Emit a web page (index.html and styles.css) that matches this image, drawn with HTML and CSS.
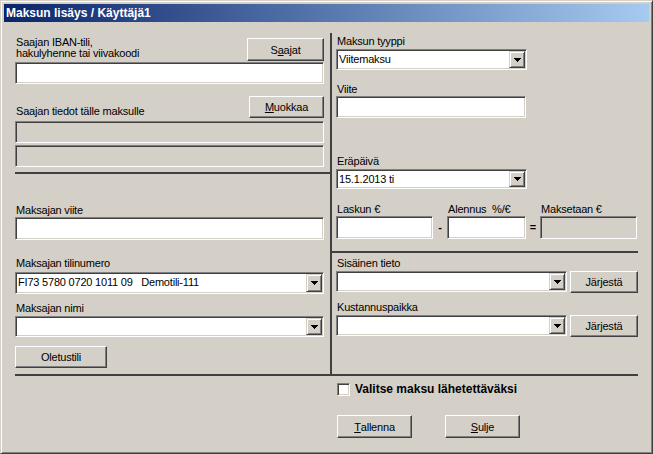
FILE: index.html
```html
<!DOCTYPE html>
<html lang="fi">
<head>
<meta charset="utf-8">
<title>Maksun lisäys</title>
<link rel="stylesheet" href="styles.css">
</head>
<body>
<div class="window">
  <div class="titlebar">Maksun lisäys / Käyttäjä1</div>
  <div class="client">
    <div class="main">
      <div class="col-left">
        <div class="row1 lw">
          <div class="lbl2">Saajan IBAN-tili,<br>hakulyhenne tai viivakoodi</div>
          <button class="btn b-saajat">S<u>a</u>ajat</button>
        </div>
        <div class="edit lw"></div>
        <div class="row2 lw">
          <div class="lbl l-tiedot">Saajan tiedot tälle maksulle</div>
          <button class="btn b-muokkaa"><u>M</u>uokkaa</button>
        </div>
        <div class="edit dis lw"></div>
        <div class="edit dis lw d2"></div>
        <div class="hline hl-left"></div>
        <div class="lbl l-mviite">Maksajan viite</div>
        <div class="edit lw h23"></div>
        <div class="lbl l-tili">Maksajan tilinumero</div>
        <div class="combo lw c-tili">
          <div class="combo-text">FI73 5780 0720 1011 09   Demotili-111</div>
          <div class="drop"><svg width="7" height="4" viewBox="0 0 7 4"><path d="M0 0h7v1H0zM1 1h5v1H1zM2 2h3v1H2zM3 3h1v1H3z"/></svg></div>
        </div>
        <div class="lbl l-nimi">Maksajan nimi</div>
        <div class="combo lw c-nimi">
          <div class="combo-text"></div>
          <div class="drop"><svg width="7" height="4" viewBox="0 0 7 4"><path d="M0 0h7v1H0zM1 1h5v1H1zM2 2h3v1H2zM3 3h1v1H3z"/></svg></div>
        </div>
        <button class="btn b-oletus">Oletustili</button>
      </div>
      <div class="vline"></div>
      <div class="col-right">
        <div class="lbl l-tyyppi">Maksun tyyppi</div>
        <div class="combo c-tyyppi">
          <div class="combo-text">Viitemaksu</div>
          <div class="drop"><svg width="7" height="4" viewBox="0 0 7 4"><path d="M0 0h7v1H0zM1 1h5v1H1zM2 2h3v1H2zM3 3h1v1H3z"/></svg></div>
        </div>
        <div class="lbl l-viite">Viite</div>
        <div class="edit e-viite"></div>
        <div class="lbl l-era">Eräpäivä</div>
        <div class="combo c-era">
          <div class="combo-text">15.1.2013 ti</div>
          <div class="drop"><svg width="7" height="4" viewBox="0 0 7 4"><path d="M0 0h7v1H0zM1 1h5v1H1zM2 2h3v1H2zM3 3h1v1H3z"/></svg></div>
        </div>
        <div class="amounts">
          <div class="lbl">Laskun €</div>
          <div></div>
          <div class="lbl">Alennus  %/€</div>
          <div></div>
          <div class="lbl">Maksetaan €</div>
          <div class="edit h23"></div>
          <div class="sign">-</div>
          <div class="edit h23"></div>
          <div class="sign">=</div>
          <div class="edit dis h23"></div>
        </div>
        <div class="hline hl-right"></div>
        <div class="lbl l-sis">Sisäinen tieto</div>
        <div class="pickrow">
          <div class="combo c-pick">
            <div class="combo-text"></div>
            <div class="drop"><svg width="7" height="4" viewBox="0 0 7 4"><path d="M0 0h7v1H0zM1 1h5v1H1zM2 2h3v1H2zM3 3h1v1H3z"/></svg></div>
          </div>
          <button class="btn b-jarj">Järjestä</button>
        </div>
        <div class="lbl l-kust">Kustannuspaikka</div>
        <div class="pickrow">
          <div class="combo c-pick">
            <div class="combo-text"></div>
            <div class="drop"><svg width="7" height="4" viewBox="0 0 7 4"><path d="M0 0h7v1H0zM1 1h5v1H1zM2 2h3v1H2zM3 3h1v1H3z"/></svg></div>
          </div>
          <button class="btn b-jarj">Järjestä</button>
        </div>
      </div>
    </div>
    <div class="hline hl-bottom"></div>
    <div class="footer">
      <div class="checkrow">
        <div class="check"></div>
        <div class="checklbl">Valitse maksu lähetettäväksi</div>
      </div>
      <div class="btnrow">
        <button class="btn b-foot"><u>T</u>allenna</button>
        <button class="btn b-foot"><u>S</u>ulje</button>
      </div>
    </div>
  </div>
</div>
</body>
</html>
```

FILE: styles.css
```css
* { box-sizing: border-box; }

body {
  margin: 0;
  background: #d4d0c8;
  font-family: "Liberation Sans", Arial, sans-serif;
  font-size: 11px;
  letter-spacing: -0.2px;
  color: #000;
}

.window {
  width: 653px;
  height: 454px;
  background: #d4d0c8;
  border: 1px solid;
  border-color: #d4d0c8 #404040 #404040 #d4d0c8;
  box-shadow: inset 1px 1px #fff, inset -1px -1px #808080;
  padding: 3px;
  display: flex;
  flex-direction: column;
}

.titlebar {
  height: 18px;
  background: linear-gradient(to right, #0a246a, #a6caf0);
  color: #fff;
  font-weight: bold;
  font-size: 12px;
  letter-spacing: 0;
  line-height: 18px;
  padding-left: 2px;
  white-space: nowrap;
}

.client {
  flex: 1;
  padding: 11px 0 0 11px;
}

.main {
  display: flex;
  height: 341px;
}

.col-left {
  width: 315px;
  display: flex;
  flex-direction: column;
}

.lw { width: 309px; }

.vline {
  width: 2px;
  background: #404040;
}

.col-right {
  width: 306px;
  padding-left: 4px;
  display: flex;
  flex-direction: column;
}

.hline {
  height: 2px;
  background: #404040;
  flex: none;
}

.hl-left { width: 315px; margin-top: 5px; }
.hl-right { width: 306px; margin-left: -4px; margin-top: 12px; }
.hl-bottom { width: 623px; }

.lbl {
  display: block;
  height: 13px;
  line-height: 13px;
  padding-left: 1px;
  white-space: pre;
}

.lbl2 {
  line-height: 11px;
  margin-top: 4px;
  padding-left: 1px;
  white-space: nowrap;
}

.edit {
  height: 22px;
  background: #fff;
  border: 1px solid;
  border-color: #808080 #fff #fff #808080;
  box-shadow: inset 1px 1px #404040, inset -1px -1px #d4d0c8;
  flex: none;
}
.edit.h23 { height: 23px; }
.edit.dis { background: #d4d0c8; }
.edit.d2 { margin-top: 2px; }

.combo {
  display: flex;
  height: 21px;
  background: #fff;
  border: 1px solid;
  border-color: #808080 #fff #fff #808080;
  box-shadow: inset 1px 1px #404040, inset -1px -1px #d4d0c8;
  padding: 1px;
  flex: none;
}

.combo-text {
  flex: 1;
  padding-left: 1px;
  line-height: 17px;
  white-space: pre;
  overflow: hidden;
}

.drop {
  width: 16px;
  flex: none;
  background: #d4d0c8;
  border: 1px solid;
  border-color: #d4d0c8 #404040 #404040 #d4d0c8;
  box-shadow: inset 1px 1px #fff, inset -1px -1px #808080;
  display: flex;
  align-items: center;
  justify-content: center;
}
.drop svg { display: block; fill: #000; }

.btn {
  font: inherit;
  letter-spacing: inherit;
  color: #000;
  height: 22px;
  padding: 0;
  margin: 0;
  background: #d4d0c8;
  border: 1px solid;
  border-color: #fff #404040 #404040 #fff;
  box-shadow: inset -1px -1px #808080;
  display: flex;
  align-items: center;
  justify-content: center;
  flex: none;
}
.btn u { text-decoration: underline; text-underline-offset: 1px; }

/* left column */
.row1 {
  display: flex;
  justify-content: space-between;
  align-items: flex-start;
  height: 29px;
  flex: none;
}
.b-saajat { width: 77px; height: 23px; margin-top: 5px; }

.row2 {
  display: flex;
  justify-content: space-between;
  align-items: flex-start;
  height: 37px;
  flex: none;
}
.l-tiedot { margin-top: 21px; }
.b-muokkaa { width: 75px; margin-top: 12px; }

.l-mviite { margin-top: 30px; }
.l-tili { margin-top: 17px; }
.c-tili { height: 22px; margin-top: 2px; }
.l-nimi { margin-top: 8px; }
.c-nimi { margin-top: 1px; }
.b-oletus { width: 92px; margin-top: 9px; }

/* right column */
.l-tyyppi { margin-top: 2px; }
.c-tyyppi { width: 191px; margin-top: 1px; }
.l-viite { margin-top: 13px; }
.e-viite { width: 190px; }
.l-era { margin-top: 37px; }
.c-era { width: 191px; margin-top: 1px; height: 20px; }
.c-era .combo-text { line-height: 16px; }

.amounts {
  display: grid;
  grid-template-columns: 97px 14px 79px 14px 97px;
  grid-template-rows: 13px 23px;
  margin-top: 14px;
}
.sign {
  text-align: center;
  line-height: 23px;
  font-weight: bold;
  letter-spacing: 0;
}

.l-sis { margin-top: 4px; }
.l-kust { margin-top: 8px; }
.pickrow {
  display: flex;
  gap: 3px;
  margin-top: 1px;
  align-items: flex-start;
}
.c-pick { width: 231px; }
.b-jarj { width: 68px; }

/* footer */
.footer {
  padding-left: 322px;
}
.checkrow {
  display: flex;
  align-items: center;
  margin-top: 7px;
  height: 13px;
}
.check {
  width: 13px;
  height: 13px;
  background: #fff;
  border: 1px solid;
  border-color: #808080 #fff #fff #808080;
  box-shadow: inset 1px 1px #404040, inset -1px -1px #d4d0c8;
}
.checklbl {
  margin-left: 5px;
  font-weight: bold;
  font-size: 12px;
  letter-spacing: 0;
  line-height: 13px;
  white-space: nowrap;
}
.btnrow {
  display: flex;
  gap: 33px;
  margin-top: 19px;
}
.b-foot { width: 75px; height: 23px; }
```
